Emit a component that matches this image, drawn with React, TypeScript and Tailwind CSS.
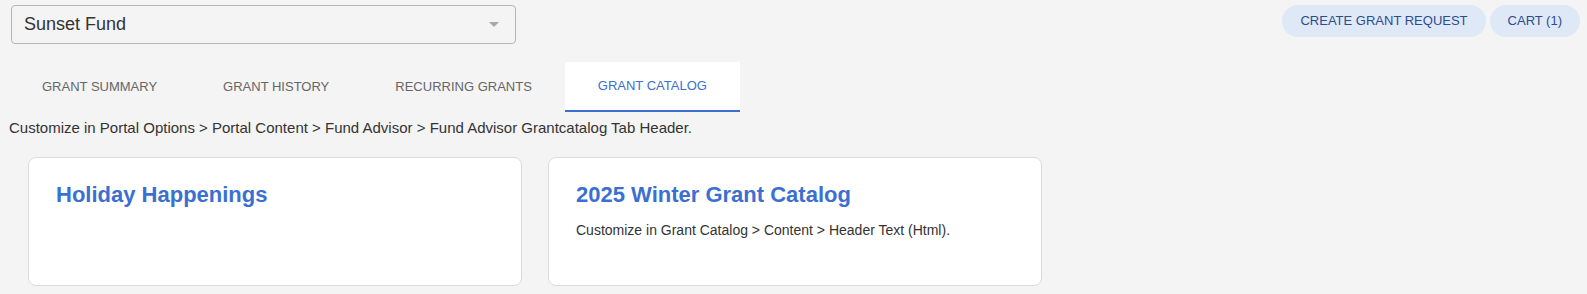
const tabs = ['GRANT SUMMARY', 'GRANT HISTORY', 'RECURRING GRANTS', 'GRANT CATALOG'];

const catalogs = [
  { title: 'Holiday Happenings', body: '' },
  { title: '2025 Winter Grant Catalog', body: 'Customize in Grant Catalog > Content > Header Text (Html).' },
];

export default function App() {
  return (
    <div className="min-h-screen bg-[#f4f4f4] font-['Liberation_Sans',Arial,sans-serif] text-[#333]">
      <div className="flex items-start justify-between pt-[5px] pl-[11px] pr-[7px]">
        <div className="flex h-[39px] w-[505px] items-center justify-between rounded border border-[#b5b5b5] pl-[12px] pr-[16px]">
          <span className="text-[18px] text-[#333]">Sunset Fund</span>
          <svg width="10" height="5" viewBox="0 0 10 5">
            <path d="M0 0 L10 0 L5 5 Z" fill="#a8a8a8" />
          </svg>
        </div>
        <div className="flex gap-[4px]">
          <button className="h-[32px] rounded-full bg-[#dfe8f7] px-[18px] text-[13px] text-[#2b4d8c]">
            CREATE GRANT REQUEST
          </button>
          <button className="h-[32px] rounded-full bg-[#dfe8f7] px-[18px] text-[13px] text-[#2b4d8c]">
            CART (1)
          </button>
        </div>
      </div>

      <div className="mt-[18px] flex pl-[9px]">
        {tabs.map((t, i) => (
          <div
            key={t}
            className={
              i === 3
                ? 'flex h-[50px] items-center border-b-2 border-[#3b6fd1] bg-white px-[33px] text-[13px] text-[#3b6fd1]'
                : 'flex h-[50px] items-center px-[33px] text-[13px] text-[#666]'
            }
          >
            {t}
          </div>
        ))}
      </div>

      <p className="mt-[7px] pl-[9px] text-[15px] leading-[18px] text-[#333]">
        Customize in Portal Options &gt; Portal Content &gt; Fund Advisor &gt; Fund Advisor Grantcatalog Tab Header.
      </p>

      <div className="mt-[20px] flex gap-[26px] pl-[28px]">
        {catalogs.map((c) => (
          <div
            key={c.title}
            className="h-[129px] w-[494px] rounded-[8px] border border-[#dcdcdc] bg-white px-[27px] pt-[23px]"
          >
            <h2 className="text-[22px] leading-[28px] font-bold text-[#3b6fd1]">{c.title}</h2>
            {c.body && <p className="mt-[11px] text-[14px] leading-[20px] text-[#333]">{c.body}</p>}
          </div>
        ))}
      </div>
    </div>
  );
}
